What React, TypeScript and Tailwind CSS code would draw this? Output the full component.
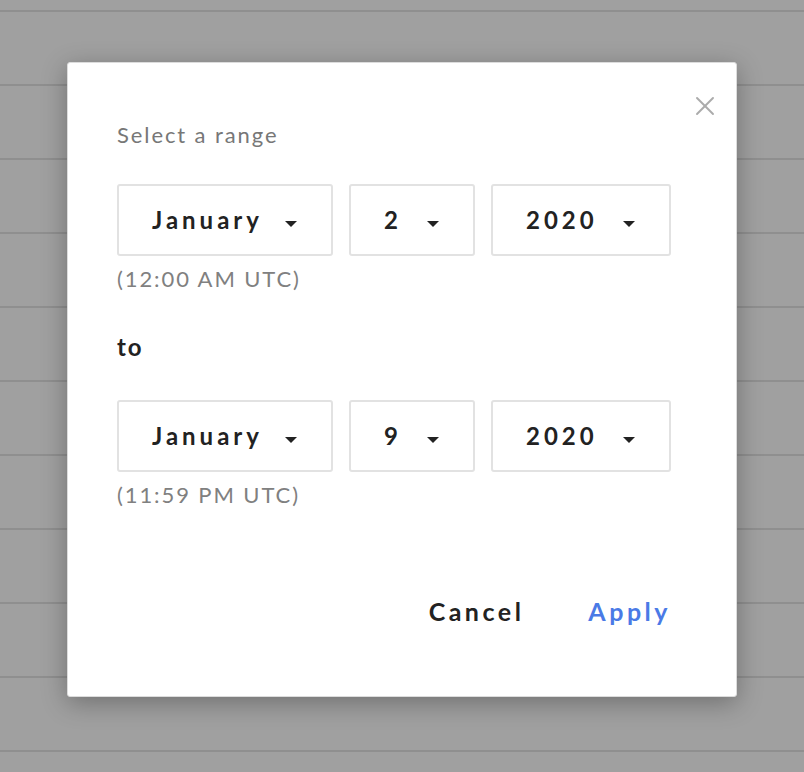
import { X } from "lucide-react";

type SelectProps = {
  value: string;
  width: string;
};

function Caret() {
  return (
    <svg width="12" height="6" viewBox="0 0 12 6" className="mt-[8px] shrink-0">
      <path d="M0 0h12L6 6z" fill="#222" />
    </svg>
  );
}

function DateSelect({ value, width }: SelectProps) {
  return (
    <div
      className={`${width} h-[72px] flex items-center justify-between pl-[33px] pr-[34px] border-2 border-[#e2e2e2] rounded-[3px] bg-white`}
    >
      <span className="text-[24px] leading-[28px] font-bold tracking-[4px] text-[#222]">{value}</span>
      <Caret />
    </div>
  );
}

function DateRow({ month, day, year }: { month: string; day: string; year: string }) {
  return (
    <div className="flex gap-[16px]">
      <DateSelect value={month} width="w-[216px]" />
      <DateSelect value={day} width="w-[126px]" />
      <DateSelect value={year} width="w-[180px]" />
    </div>
  );
}

export default function App() {
  const rows = Array.from({ length: 11 });

  return (
    <div className="relative w-[804px] h-[772px] overflow-hidden bg-[#a0a0a0] font-['Lato',sans-serif]">
      {/* dimmed list behind the dialog */}
      <div className="flex flex-col">
        <div className="h-[12px] border-b-2 border-[#8f8f8f]" />
        {rows.map((_, i) => (
          <div key={i} className="h-[74px] border-b-2 border-[#8f8f8f]" />
        ))}
      </div>

      <div className="absolute left-[67px] top-[62px] w-[670px] h-[635px] bg-white border border-[#dcdcdc] rounded-[3px] shadow-[0_6px_26px_rgba(0,0,0,0.3)] px-[49px] pt-[58px]">
        <button className="absolute right-[15px] top-[27px] text-[#ababab]">
          <X size={32} strokeWidth={1.4} />
        </button>

        <div className="text-[22px] leading-[28px] tracking-[1.9px] text-[#777]">Select a range</div>

        <div className="mt-[35px]">
          <DateRow month="January" day="2" year="2020" />
        </div>
        <div className="mt-[9px] text-[22px] leading-[28px] tracking-[1.9px] text-[#808080]">(12:00 AM UTC)</div>

        <div className="mt-[40px] text-[24px] leading-[28px] font-bold tracking-[2px] text-[#222]">to</div>

        <div className="mt-[39px]">
          <DateRow month="January" day="9" year="2020" />
        </div>
        <div className="mt-[9px] text-[22px] leading-[28px] tracking-[1.9px] text-[#808080]">(11:59 PM UTC)</div>

        <div className="mt-[88px] flex justify-end gap-[64px] pr-[16px]">
          <button className="text-[25px] leading-[28px] font-bold tracking-[3.5px] text-[#222]">Cancel</button>
          <button className="text-[25px] leading-[28px] font-bold tracking-[3.5px] text-[#4a7ae6]">Apply</button>
        </div>
      </div>
    </div>
  );
}
